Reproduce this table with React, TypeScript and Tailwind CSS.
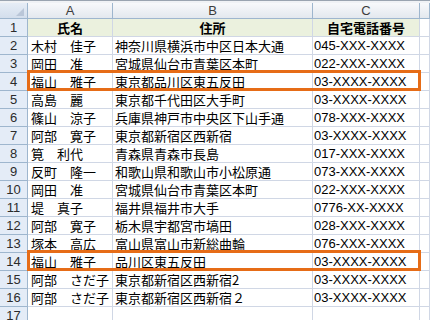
const rows: [string, string, string][] = [
  ["木村　佳子", "神奈川県横浜市中区日本大通", "045-XXX-XXXX"],
  ["岡田　准", "宮城県仙台市青葉区本町", "022-XXX-XXXX"],
  ["福山　雅子", "東京都品川区東五反田", "03-XXXX-XXXX"],
  ["高島　麗", "東京都千代田区大手町", "03-XXXX-XXXX"],
  ["篠山　涼子", "兵庫県神戸市中央区下山手通", "078-XXX-XXXX"],
  ["阿部　寛子", "東京都新宿区西新宿", "03-XXXX-XXXX"],
  ["筧　利代", "青森県青森市長島", "017-XXX-XXXX"],
  ["反町　隆一", "和歌山県和歌山市小松原通", "073-XXX-XXXX"],
  ["岡田　准", "宮城県仙台市青葉区本町", "022-XXX-XXXX"],
  ["堤　真子", "福井県福井市大手", "0776-XX-XXXX"],
  ["阿部　寛子", "栃木県宇都宮市塙田", "028-XXX-XXXX"],
  ["塚本　高広", "富山県富山市新総曲輪", "076-XXX-XXXX"],
  ["福山　雅子", "品川区東五反田", "03-XXXX-XXXX"],
  ["阿部　さだ子", "東京都新宿区西新宿2", "03-XXXX-XXXX"],
  ["阿部　さだ子", "東京都新宿区西新宿２", "03-XXXX-XXXX"],
];

const jp = "font-['Noto_Sans_CJK_JP','Noto_Sans',sans-serif]";
const cols = "grid grid-cols-[28px_85px_200px_107px_1fr]";

function RowHead({ n }: { n: number }) {
  return (
    <div className="h-[18px] bg-[#e4ecf7] border-r border-b border-[#9eb6ce] flex items-center justify-center text-[13px] leading-none text-[#2b2b2b] font-['Liberation_Sans',sans-serif]">
      {n}
    </div>
  );
}

function Cell({ children, className = "" }: { children?: React.ReactNode; className?: string }) {
  return (
    <div className={`h-[18px] border-r border-b border-[#d0d7e5] flex items-center overflow-hidden whitespace-nowrap text-[13px] leading-none text-black ${className}`}>
      {children}
    </div>
  );
}

export default function App() {
  return (
    <div className="w-[430px] h-[320px] overflow-hidden bg-white">
      <div className="h-[3px] bg-[#f0f2f5] border-t border-[#9aa4b0]" />
      {/* column headers */}
      <div className={`${cols} h-[16px]`}>
        <div className="relative bg-gradient-to-b from-[#e6edf6] to-[#d3deec] border-r border-b border-[#9eb6ce]">
          <svg className="absolute right-[3px] bottom-[2px]" width="8" height="8" viewBox="0 0 8 8">
            <polygon points="8,0 8,8 0,8" fill="#b9c6d8" />
          </svg>
        </div>
        {["A", "B", "C", ""].map((c, i) => (
          <div
            key={i}
            className="bg-gradient-to-b from-[#f8f9fb] to-[#e3e8ee] border-r border-b border-[#9eb6ce] flex items-center justify-center text-[13px] leading-none text-[#3c3c3c] font-['Liberation_Sans',sans-serif]"
          >
            {c}
          </div>
        ))}
      </div>
      {/* title row */}
      <div className={cols}>
        <RowHead n={1} />
        <Cell className={`bg-[#ebf1de] justify-center font-bold ${jp}`}>氏名</Cell>
        <Cell className={`bg-[#ebf1de] justify-center font-bold ${jp}`}>住所</Cell>
        <Cell className={`bg-[#ebf1de] justify-center font-bold ${jp}`}>自宅電話番号</Cell>
        <Cell />
      </div>
      {rows.map(([name, addr, tel], i) => {
        const marked = i === 2 || i === 12;
        return (
          <div key={i} className={`${cols} relative`}>
            <RowHead n={i + 2} />
            <Cell className={`pl-[3px] ${jp}`}>{name}</Cell>
            <Cell className={`pl-[2px] ${jp}`}>{addr}</Cell>
            <Cell className="pl-[1px] font-['Liberation_Sans',sans-serif]">{tel}</Cell>
            <Cell />
            {marked && (
              <div className="absolute left-[27px] top-[-3px] w-[394px] h-[21px] border-[3px] border-[#e66c17]" />
            )}
          </div>
        );
      })}
      <div className={cols}>
        <RowHead n={17} />
        <Cell />
        <Cell />
        <Cell />
        <Cell />
      </div>
    </div>
  );
}
